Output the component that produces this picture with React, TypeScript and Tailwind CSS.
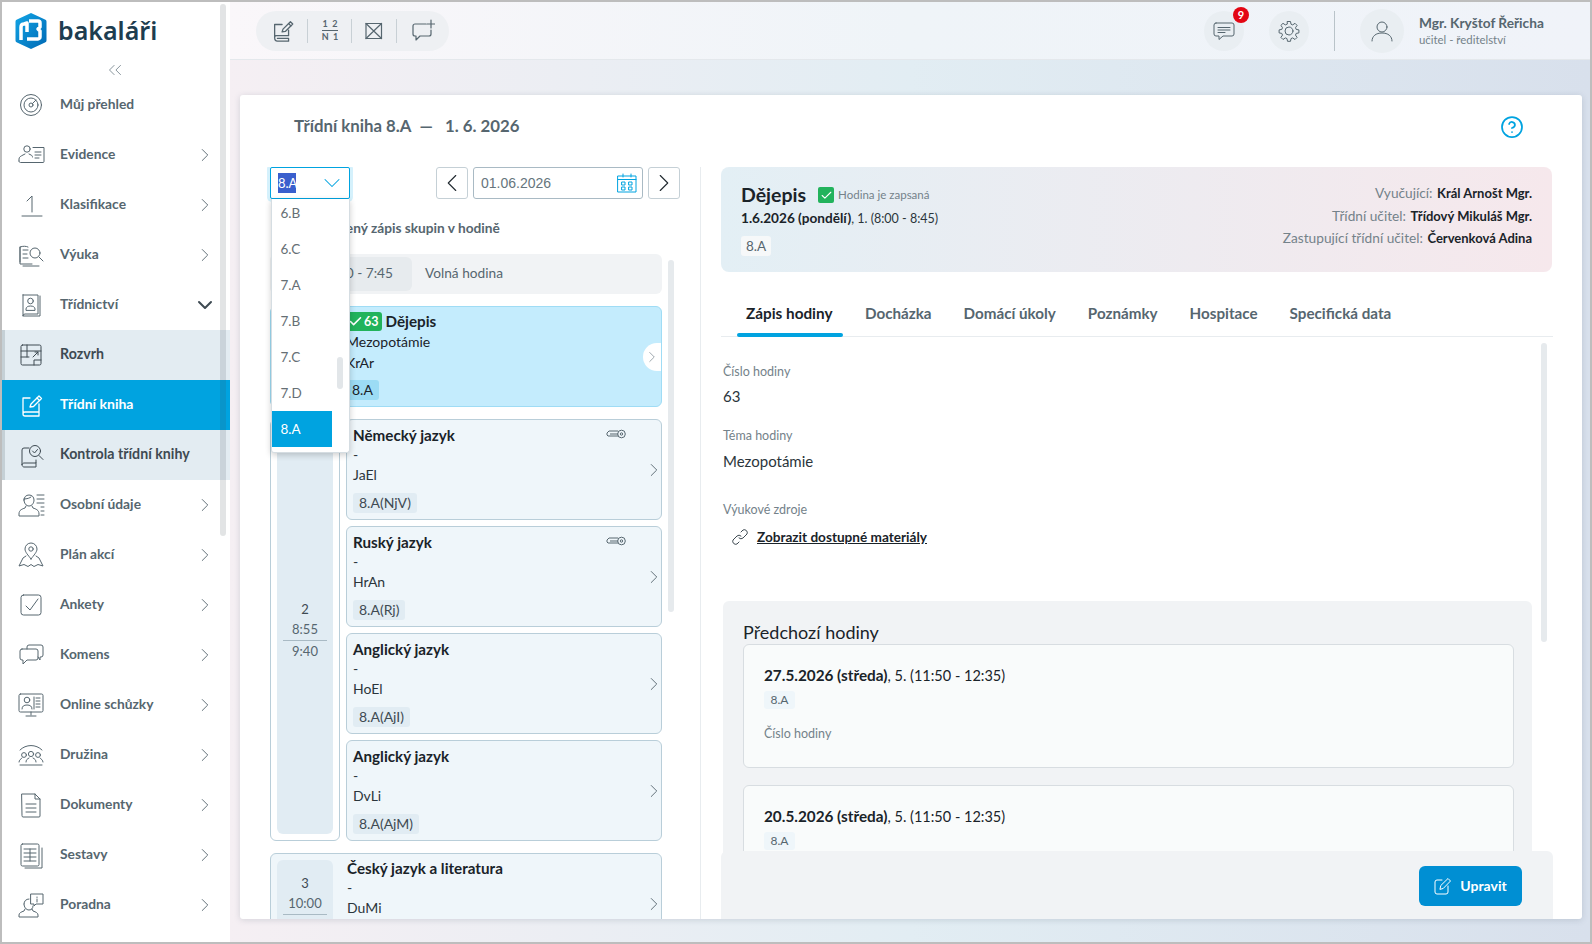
import React from 'react';
import { ChevronRight, ChevronDown, ChevronLeft, ChevronsLeft, Check, CircleHelp } from 'lucide-react';

type IconProps = { className?: string };

// shared frame for the thin line icons
function Line({ children, className = 'w-[28px] h-[28px] text-[#56666f]', box = 28 }: { children: React.ReactNode; className?: string; box?: number }) {
  return (
    <svg viewBox={`0 0 ${box} ${box}`} fill="none" stroke="currentColor" strokeWidth="1" strokeLinecap="round" strokeLinejoin="round" className={className}>
      {children}
    </svg>
  );
}

const IconDash = () => (
  <Line>
    <circle cx="14" cy="14" r="10.5" />
    <circle cx="14" cy="14" r="7" />
    <circle cx="14" cy="14" r="2" />
    <path d="M15.5 12.5l3.5-3.5" />
  </Line>
);
const IconEvidence = () => (
  <Line>
    <circle cx="10" cy="8" r="3.2" />
    <path d="M2 20v-2c0-2 2-3 4-4l2-1M12 13l2 1c1 .5 1.500 1 1.500 2M2 20c0 1 .5 1.500 1.500 1.500H26c.8 0 1-.5 1-1V6.500H16" />
    <path d="M18 11h6M18 14h6M18 17h4" />
  </Line>
);
const IconOne = () => (
  <Line>
    <path d="M15 21V5l-5 5M5 25h20" />
  </Line>
);
const IconTeach = () => (
  <Line>
    <path d="M3 21V6c3-1 6-1 8 0M3 6v17h12M6 25h16" />
    <path d="M6 9h5M6 13h4M6 17h5" />
    <circle cx="18" cy="12" r="5" />
    <path d="M22 16l4 4" />
  </Line>
);
const IconClassBook = () => (
  <Line>
    <path d="M6 4h15v19H8a2 2 0 0 0-2 2V4zM6 25h17V5" />
    <circle cx="13.500" cy="10" r="2.800" />
    <path d="M9 19v-1c0-2 2-3 4.500-3s4.500 1 4.500 3v1z" />
  </Line>
);
const IconSchedule = () => (
  <Line className="w-[28px] h-[28px] text-[#3e4a52]">
    <rect x="4" y="4" width="20" height="20" rx="1.500" />
    <path d="M4 10h20M10 4v12M4 16h8M17 24v-5h7" />
    <path d="M16 16l5-5M18 11h3v3" />
  </Line>
);
const IconClassEdit = () => (
  <Line className="w-[28px] h-[28px] text-white stroke-[1.300]">
    <path d="M6 7h7M6 7v16c0-1 1-2 2-2h14V13M6 23c0 1 1 2 2 2h14v-4" />
    <path d="M13 16l1-3 8-8 2.500 2.500-8 8z" />
    <path d="M20 7l2.500 2.500" />
  </Line>
);
const IconCheckBook = () => (
  <Line className="w-[28px] h-[28px] text-[#3e4a52]">
    <path d="M12 7H7a2 2 0 0 0-2 2v15c0-1 1-2 2-2h12v-3M5 24c0 1 1 2 2 2h12v-4" />
    <circle cx="18" cy="10" r="5.500" />
    <path d="M15.500 10l2 2 3-3.500M22 14.500l4 4" />
  </Line>
);
const IconPerson = () => (
  <Line>
    <path d="M7 9c0-3 2-5 5-5s5 2 5 5-2 6-5 6-5-3-5-6zM7 8c3 0 6-1 7-2M9 15l-1 2c-3 1-6 2-6 6v2h20v-2c0-4-3-5-6-6l-1-2" />
    <path d="M20 4h7M20 8h7M20 12h7M24 16h3M24 20h3M24 24h3" />
  </Line>
);
const IconPin = () => (
  <Line>
    <path d="M14 18c-3-4-6-7-6-10a6 6 0 0 1 12 0c0 3-3 6-6 10z" />
    <circle cx="14" cy="8" r="2.200" />
    <path d="M9 15l-3 2-4 8 5-1.500 4 2 3-2 3 2 4-2 5 1.500-4-8-3-2" />
  </Line>
);
const IconCheckBox = () => (
  <Line>
    <rect x="4" y="4" width="20" height="20" rx="2.500" />
    <path d="M9 15l4 4 8-11" />
  </Line>
);
const IconChat = () => (
  <Line>
    <path d="M5 8h14a2 2 0 0 1 2 2v7a2 2 0 0 1-2 2H10l-4 4v-4H5a2 2 0 0 1-2-2v-7a2 2 0 0 1 2-2z" />
    <path d="M10 8V6a2 2 0 0 1 2-2h12a2 2 0 0 1 2 2v8a2 2 0 0 1-2 2h-1v3l-2-3" />
  </Line>
);
const IconOnline = () => (
  <Line>
    <rect x="2" y="3" width="24" height="18" rx="1.500" />
    <circle cx="10" cy="9" r="2.800" />
    <path d="M5 18c0-3 2-4 5-4s5 1 5 4M17 6v12M19 7h4M19 10h4M19 13h4M19 16h4M14 21v3M9 25h10" />
  </Line>
);
const IconGroup = () => (
  <Line>
    <path d="M3 9c6-6 16-6 22 0" />
    <circle cx="7" cy="14" r="2.400" />
    <circle cx="14" cy="13" r="2.600" />
    <circle cx="21" cy="14" r="2.400" />
    <path d="M2 21c0-2 2-3 3-4M12 17c-2 1-3 2-3 4M16 17c2 1 3 2 3 4M26 21c0-2-2-3-3-4M3 24h22" />
  </Line>
);
const IconDoc = () => (
  <Line>
    <path d="M5 3h13l5 5v17a1 1 0 0 1-1 1H6a1 1 0 0 1-1-1z" />
    <path d="M18 3v5h5M9 13h10M9 17h10M9 21h10" />
  </Line>
);
const IconReport = () => (
  <Line>
    <rect x="4" y="3" width="18" height="22" rx="1.500" />
    <path d="M7 8h12M7 12h12M7 16h12M7 20h12M13 8v12M25 7v20H8" />
  </Line>
);
const IconAdvice = () => (
  <Line>
    <path d="M7 13c0-3 2-5 5-5M7 13c0 3 2 6 5 6s4-2 4-4M8 18l-1 2c-3 1-5 2-5 4v2h19v-2c0-2-2-3-5-4l-1-2" />
    <path d="M14 3h12v10h-7l-2 2v-2h-3z" />
    <path d="M20 6v.5M20 8v3" />
  </Line>
);

const BookEdit = ({ className }: IconProps) => (
  <Line className={className}>
    <path d="M5 7h8M5 7v14M5 21c0-1 1-2 2-2h13v-6M5 21c0 2 1 4 3 4h12v-3H8M8 22h12" />
    <path d="M13 15l1-3 8-8 2.500 2.500-8 8z" />
    <path d="M20 6l2.500 2.500" />
  </Line>
);

function KeyIcon() {
  return (
    <svg viewBox="0 0 20 10" fill="none" stroke="#56666f" strokeWidth="1" className="w-[20px] h-[10px]">
      <path d="M12 2H3L1 4v2l1 1h10M4 5h8" />
      <circle cx="15.500" cy="5" r="3.800" />
      <circle cx="15.500" cy="5" r="1.200" />
    </svg>
  );
}

function Logo() {
  return (
    <svg viewBox="0 0 32 36" className="w-[32px] h-[36px]">
      <defs>
        <linearGradient id="lg" x1="0" y1="0" x2="1" y2="1">
          <stop offset="0" stopColor="#12a5e6" />
          <stop offset="1" stopColor="#0069b4" />
        </linearGradient>
      </defs>
      <path d="M16 0l14 6.500a2 2 0 0 1 1.500 2v19a2 2 0 0 1-1.500 2L16 36 2 29.500a2 2 0 0 1-1.500-2v-19a2 2 0 0 1 1.500-2z" fill="url(#lg)" />
      <path d="M6 27V14c0-2 1-3 3-3l3-1v9M14 8h9c1.500 0 2 1 2 2v4l-2 2 2 2v6c0 1-1 2-2 2H12" fill="none" stroke="#fff" strokeWidth="3.500" strokeLinejoin="round" />
    </svg>
  );
}

type NavEntry = { label: string; icon: React.ReactNode; sub?: boolean; active?: boolean; open?: boolean; plain?: boolean };

const nav: NavEntry[] = [
  { label: 'Můj přehled', icon: <IconDash />, plain: true },
  { label: 'Evidence', icon: <IconEvidence /> },
  { label: 'Klasifikace', icon: <IconOne /> },
  { label: 'Výuka', icon: <IconTeach /> },
  { label: 'Třídnictví', icon: <IconClassBook />, open: true },
  { label: 'Rozvrh', icon: <IconSchedule />, sub: true },
  { label: 'Třídní kniha', icon: <IconClassEdit />, sub: true, active: true },
  { label: 'Kontrola třídní knihy', icon: <IconCheckBook />, sub: true },
  { label: 'Osobní údaje', icon: <IconPerson /> },
  { label: 'Plán akcí', icon: <IconPin /> },
  { label: 'Ankety', icon: <IconCheckBox /> },
  { label: 'Komens', icon: <IconChat /> },
  { label: 'Online schůzky', icon: <IconOnline /> },
  { label: 'Družina', icon: <IconGroup /> },
  { label: 'Dokumenty', icon: <IconDoc /> },
  { label: 'Sestavy', icon: <IconReport /> },
  { label: 'Poradna', icon: <IconAdvice /> },
];

function NavRow({ item }: { item: NavEntry }) {
  const bg = item.active ? 'bg-[#00a3e0] text-white text-[14px]' : item.sub ? 'bg-[#e3ecf2] text-[#3e4a52] text-[14.2px]' : 'text-[#56666f] text-[13.8px]';
  return (
    <div className={`relative flex items-center h-[50px] shrink-0 leading-[20px] font-bold ${bg}`}>
      {item.sub && !item.active && <div className="absolute left-0 top-0 bottom-0 w-[3px] bg-[#c5d0d6]" />}
      <div className="w-[58px] pl-[15px] shrink-0 flex items-center">{item.icon}</div>
      <span className="flex-1 whitespace-nowrap -mt-[2px]">{item.label}</span>
      {!item.sub && !item.plain && !item.open && <ChevronRight className="w-[22px] h-[22px] mr-[14px] text-[#56666f]" strokeWidth={1} />}
      {item.open && <ChevronDown className="w-[24px] h-[24px] mr-[13px] text-[#3e4a52]" strokeWidth={2} />}
    </div>
  );
}

function Sidebar() {
  return (
    <aside className="relative w-[228px] shrink-0 bg-white overflow-hidden flex flex-col">
      <div className="h-[58px] shrink-0 flex items-center pl-[13px] gap-[11px]">
        <Logo />
        <span className="font-['Noto_Sans',sans-serif] text-[25px] leading-[30px] font-semibold text-[#1d3d50] -mt-[3px]">bakaláři</span>
      </div>
      <div className="h-[20px] shrink-0 flex justify-center pr-[2px]">
        <ChevronsLeft className="w-[22px] h-[22px] text-[#7d8b93] -mt-[1px]" strokeWidth={1} />
      </div>
      {nav.map((item) => (
        <NavRow key={item.label} item={item} />
      ))}
      <div className="absolute left-[218px] top-[2px] w-[6px] h-[532px] rounded-full bg-[#3e4a52]/15" />
    </aside>
  );
}

function TopBar() {
  return (
    <header className="h-[58px] shrink-0 flex items-center justify-between pl-[26px] pr-[47px] bg-gradient-to-r from-[#faf7fa] via-[#eff4f8] to-[#f0f3f9] border-b border-[#e4e8ec]">
      <div className="flex items-center h-[40px] px-[14px] rounded-full bg-[#eef0f3]">
        <BookEdit className="w-[26px] h-[26px] text-[#56666f] stroke-[1.400]" />
        <div className="w-px h-[24px] bg-[#c8d0d5] ml-[11px] mr-[12px]" />
        <div className="flex flex-col items-center w-[20px] text-[9px] leading-[10px] font-bold text-[#56666f] whitespace-nowrap">
          <span>1&nbsp;&nbsp;2</span>
          <div className="w-[16px] h-px bg-[#56666f] my-[1px]" />
          <span>N&nbsp;&nbsp;1</span>
        </div>
        <div className="w-px h-[24px] bg-[#c8d0d5] ml-[11px] mr-[13px]" />
        <Line className="w-[18px] h-[18px] text-[#56666f] stroke-[1.200]" box={18}>
          <rect x="1" y="1.500" width="15.500" height="15" />
          <path d="M1 1.500l15.500 15M16.500 1.500L1 16.500" />
        </Line>
        <div className="w-px h-[24px] bg-[#c8d0d5] ml-[13px] mr-[14px]" />
        <Line className="w-[24px] h-[24px] text-[#56666f] stroke-[1.200]" box={24}>
          <path d="M15 5H4a2 2 0 0 0-2 2v8a2 2 0 0 0 2 2h1v4l4-4h9a2 2 0 0 0 2-2v-4" />
          <path d="M20 1v8M16 5h8" />
        </Line>
      </div>
      <div className="flex items-center">
        <div className="relative w-[40px] h-[40px] rounded-full bg-[#e9eef2] flex items-center justify-center">
          <Line className="w-[24px] h-[24px] text-[#56666f]" box={24}>
            <path d="M4 4h16a2 2 0 0 1 2 2v9a2 2 0 0 1-2 2h-9l-4 3.500V17H4a2 2 0 0 1-2-2V6a2 2 0 0 1 2-2z" />
            <path d="M6 8.500h12M6 11h12M6 13.500h7" />
          </Line>
          <span className="absolute -top-[4px] right-[-5px] w-[16px] h-[16px] rounded-full bg-[#e30613] text-white text-[11px] leading-[16px] text-center font-bold">9</span>
        </div>
        <div className="w-[40px] h-[40px] rounded-full bg-[#e9eef2] flex items-center justify-center ml-[25px]">
          <Line className="w-[22px] h-[22px] text-[#56666f]" box={22}>
            <path d="M9.500 1.500h3l.5 2.700 1.700.7 2.300-1.600 2.100 2.100-1.600 2.300.7 1.700 2.700.5v3l-2.700.5-.7 1.700 1.600 2.300-2.100 2.100-2.300-1.600-1.700.7-.5 2.700h-3l-.5-2.700-1.700-.7-2.300 1.600-2.100-2.100 1.600-2.300-.7-1.700-2.700-.5v-3l2.700-.5.7-1.700-1.600-2.300 2.100-2.100 2.300 1.600 1.700-.7z" />
            <circle cx="11" cy="11" r="4" />
          </Line>
        </div>
        <div className="w-px h-[40px] bg-[#b9c3c9] ml-[25px] mr-[25px]" />
        <div className="w-[44px] h-[44px] rounded-full bg-[#e9eef2] flex items-center justify-center">
          <Line className="w-[24px] h-[24px] text-[#56666f]" box={24}>
            <circle cx="12" cy="8" r="5" />
            <path d="M2 22c0-5 4-8 10-8s10 3 10 8" />
          </Line>
        </div>
        <div className="ml-[15px] flex flex-col w-[124px] whitespace-nowrap">
          <span className="text-[13.700px] leading-[18px] font-bold text-[#56666f]">Mgr. Kryštof Řeřicha</span>
          <span className="text-[11.400px] leading-[15px] text-[#74828a]">učitel - ředitelství</span>
        </div>
      </div>
    </header>
  );
}

function ClassSelect() {
  const options = ['6.B', '6.C', '7.A', '7.B', '7.C', '7.D', '8.A'];
  return (
    <div className="relative w-[80px] h-[32px]">
      <div className="h-full flex items-center justify-between pl-[7px] pr-[3px] bg-white border border-[#00a3e0] rounded-[2px] shadow-[0_0_0_3px_#d5f1fc]">
        <span className="bg-[#3a5fcd] text-white text-[13px] leading-[20px] w-[18px] whitespace-nowrap">8.A</span>
        <ChevronDown className="w-[28px] h-[28px] text-[#00a3e0]" strokeWidth={0.9} />
      </div>
      <div className="absolute z-20 left-[0.5px] top-[32px] w-[79px] h-[254px] bg-white overflow-hidden rounded-b-[3px] border-x border-b border-[#d5dde2] shadow-[0_2px_6px_rgba(0,0,0,0.2)]">
        <div className="-mt-[4px] w-[60px]">
          {options.map((o) => (
            <div key={o} className={`h-[36px] pl-[9px] flex items-center text-[13.500px] leading-[20px] ${o === '8.A' ? 'bg-[#00a3e0] text-white' : 'text-[#666f75]'}`}>
              {o}
            </div>
          ))}
        </div>
        <div className="absolute left-[65px] top-[158px] w-[6px] h-[32px] rounded-full bg-[#e2e6e9]" />
      </div>
    </div>
  );
}

function DateNav() {
  return (
    <div className="flex items-center gap-[5px]">
      <button className="w-[32px] h-[32px] border border-[#c5d0d6] rounded-[3px] flex items-center justify-center bg-white">
        <ChevronLeft className="w-[30px] h-[30px] text-[#222b31]" strokeWidth={0.9} />
      </button>
      <div className="w-[170px] h-[32px] border border-[#a9bac4] rounded-[3px] flex items-center justify-between pl-[7px] pr-[5px] bg-white">
        <span className="font-['Liberation_Sans',sans-serif] text-[14px] text-[#66757d]">01.06.2026</span>
        <Line className="w-[20px] h-[20px] text-[#00a3e0]" box={20}>
          <rect x="1" y="3" width="18" height="16" />
          <path d="M1 6.500h18M6 1v3M14 1v3" />
          <rect x="5" y="9" width="3" height="3" />
          <rect x="12" y="9" width="3" height="3" />
          <rect x="5" y="14" width="3" height="3" />
          <rect x="12" y="14" width="3" height="3" />
        </Line>
      </div>
      <button className="w-[32px] h-[32px] border border-[#c5d0d6] rounded-[3px] flex items-center justify-center bg-white">
        <ChevronRight className="w-[30px] h-[30px] text-[#222b31]" strokeWidth={0.9} />
      </button>
    </div>
  );
}

function TimeColumn({ n, from, to }: { n: string; from: string; to: string }) {
  return (
    <div className="w-[56px] shrink-0 bg-[#e1ecf3] rounded-md flex flex-col items-center justify-center text-[13px] leading-[20px] text-[#56666f]">
      <span className="text-[#3e4a52]">{n}</span>
      <span className="h-[21px]">{from}</span>
      <div className="w-[44px] h-px bg-[#a9bac4] shrink-0" />
      <span>{to}</span>
    </div>
  );
}

function LessonBody({ title, teacher, group, keyed }: { title: string; teacher: string; group?: string; keyed?: boolean }) {
  return (
    <div className="relative flex-1 text-[14px] leading-[20px] text-[#2b353b]">
      <div className="flex items-center justify-between">
        <span className="text-[15.200px] font-bold text-[#1a2329]">{title}</span>
        {keyed && <div className="mr-[27px] -mt-[2px]"><KeyIcon /></div>}
      </div>
      <div>-</div>
      <div>{teacher}</div>
      {group && <div className="mt-[8px] inline-block h-[20px] px-[6px] rounded-[3px] bg-[#e1ecf3] text-[#3e4a52]">{group}</div>}
    </div>
  );
}

function GroupCard({ title, teacher, group, keyed }: { title: string; teacher: string; group: string; keyed?: boolean }) {
  return (
    <div className="relative flex-1 border border-[#b9ced9] rounded-md bg-[#eff6fa] pl-[6px] pt-[5px] pr-[8px]">
      <LessonBody title={title} teacher={teacher} group={group} keyed={keyed} />
      <ChevronRight className="absolute -right-[4px] top-[39px] w-[22px] h-[22px] text-[#56666f]" strokeWidth={1} />
    </div>
  );
}

function Timetable() {
  return (
    <div className="flex items-start">
      <div className="w-[392px] flex flex-col gap-[12px]">
        <div className="h-[40px] rounded-md bg-[#f1f3f5] flex items-center pl-[7px] pr-[7px] py-[3px] text-[13.700px] leading-[18px] text-[#56666f]">
          <div className="w-[135px] h-[34px] flex items-center justify-end rounded-md bg-[#e7ebee] pr-[19px] pb-[2px]">7:00 - 7:45</div>
          <span className="ml-[13px] -mt-[2px]">Volná hodina</span>
        </div>

        <div className="relative h-[101px] flex border border-[#9fdcf5] rounded-md bg-[#c4ecfd]">
          <div className="w-[75px] shrink-0" />
          <div className="pt-[4px] text-[14px] leading-[21px] text-[#1a2329]">
            <div className="flex items-center h-[20px]">
              <span className="flex items-center h-[19px] px-[2px] rounded-[3px] bg-[#22b35c] text-white text-[12.500px] font-bold">
                <Check className="w-[15px] h-[15px]" strokeWidth={2.500} />
                <span className="ml-[1px] mr-[1px]">63</span>
              </span>
              <span className="ml-[4px] text-[15.200px] font-bold">Dějepis</span>
            </div>
            <div>Mezopotámie</div>
            <div>KrAr</div>
            <div className="mt-[7px] h-[20px] inline-block px-[6px] leading-[20px] rounded-[3px] bg-[#9cdcf5]">8.A</div>
          </div>
          <div className="absolute right-0 top-[36px] w-[18px] h-[28px] rounded-l-full bg-white flex items-center justify-center">
            <ChevronRight className="w-[20px] h-[20px] text-[#7d8b93]" strokeWidth={1} />
          </div>
        </div>

        <div className="flex h-[422px] gap-[6px]">
          <div className="w-[70px] shrink-0 border border-[#b9ced9] rounded-md p-[6px] flex">
            <TimeColumn n="2" from="8:55" to="9:40" />
          </div>
          <div className="flex-1 flex flex-col gap-[6px]">
            <GroupCard title="Německý jazyk" teacher="JaEl" group="8.A(NjV)" keyed />
            <GroupCard title="Ruský jazyk" teacher="HrAn" group="8.A(Rj)" keyed />
            <GroupCard title="Anglický jazyk" teacher="HoEl" group="8.A(AjI)" />
            <GroupCard title="Anglický jazyk" teacher="DvLi" group="8.A(AjM)" />
          </div>
        </div>

        <div className="relative h-[101px] flex border border-[#b9ced9] rounded-md bg-[#eff6fa] pl-[6px] py-[6px]">
          <TimeColumn n="3" from="10:00" to="10:45" />
          <div className="ml-[14px] -mt-[2px]">
            <LessonBody title="Český jazyk a literatura" teacher="DuMi" />
          </div>
          <ChevronRight className="absolute -right-[4px] top-[39px] w-[22px] h-[22px] text-[#56666f]" strokeWidth={1} />
        </div>
      </div>
      <div className="ml-[6px] mt-[6px] w-[6px] h-[352px] rounded-full bg-[#e6eaed] shrink-0" />
    </div>
  );
}

function PrevLesson({ date, time }: { date: string; time: string }) {
  return (
    <div className="shrink-0 h-[124px] border border-[#d8dde1] rounded-md bg-[#f9fbfb] pl-[20px] pt-[20px] text-[#1a2329]">
      <div className="text-[14.500px] leading-[20px]">
        <span className="font-bold text-[15.300px]">{date}</span>, {time}
      </div>
      <div className="mt-[5px] w-[31px] h-[18px] rounded-[3px] bg-[#eff6fa] text-[12px] leading-[18px] text-center text-[#56666f]">8.A</div>
      <div className="mt-[15px] text-[12.500px] leading-[20px] text-[#74828a]">Číslo hodiny</div>
    </div>
  );
}

function Detail() {
  const tabs = ['Docházka', 'Domácí úkoly', 'Poznámky', 'Hospitace', 'Specifická data'];
  return (
    <div className="relative w-[832px] shrink-0 h-full overflow-hidden">
      <div className="h-[105px] rounded-lg bg-gradient-to-r from-[#e3eff5] to-[#f6e8ec] flex justify-between px-[20px] pt-[14px] mr-[1px]">
        <div>
          <div className="flex items-center h-[28px]">
            <span className="text-[19.500px] leading-[28px] font-bold text-[#1a2329]">Dějepis</span>
            <span className="ml-[12px] w-[16px] h-[16px] rounded-[2px] bg-[#22b35c] flex items-center justify-center">
              <Check className="w-[13px] h-[13px] text-white" strokeWidth={2} />
            </span>
            <span className="ml-[4px] text-[11.500px] text-[#74828a]">Hodina je zapsaná</span>
          </div>
          <div className="text-[12.500px] leading-[18px] text-[#2b353b]">
            <span className="font-bold text-[13.600px] text-[#1a2329]">1.6.2026 (pondělí)</span>, 1. (8:00 - 8:45)
          </div>
          <div className="mt-[8px] w-[30px] h-[20px] rounded-[3px] bg-[#f6f8f9] text-[13.500px] leading-[20px] text-center text-[#56666f]">8.A</div>
        </div>
        <div className="text-right text-[13.700px] leading-[21.5px] text-[#74828a] pt-[1px]">
          <div>Vyučující: <span className="ml-[1px] font-bold text-[13px] text-[#1a2329]">Král Arnošt Mgr.</span></div>
          <div>Třídní učitel: <span className="ml-[1px] font-bold text-[13px] text-[#1a2329]">Třídový Mikuláš Mgr.</span></div>
          <div>Zastupující třídní učitel: <span className="ml-[1px] font-bold text-[13px] text-[#1a2329]">Červenková Adina</span></div>
        </div>
      </div>

      <div className="mt-[18px] h-[47px] flex items-stretch border-b border-[#e8ecef] pl-[16px]">
        <div className="relative w-[106px] pl-[9px] pt-[12px] text-[15.300px] leading-[22px] font-bold text-[#1a2329] whitespace-nowrap">
          Zápis hodiny
          <div className="absolute left-0 right-0 -bottom-[1px] h-[4px] rounded-sm bg-[#00a3e0]" />
        </div>
        <div className="flex pt-[12px] pl-[22px] gap-[32px] text-[15.200px] leading-[22px] font-bold text-[#56666f] whitespace-nowrap">
          {tabs.map((t) => (
            <span key={t}>{t}</span>
          ))}
        </div>
      </div>

      <div className="pl-[2px] pr-[21px] pt-[25px]">
        <div className="text-[12.500px] leading-[20px] text-[#74828a]">Číslo hodiny</div>
        <div className="mt-[4px] text-[15px] leading-[20px] text-[#2b353b]">63</div>
        <div className="mt-[20px] text-[12.500px] leading-[20px] text-[#74828a]">Téma hodiny</div>
        <div className="mt-[4px] text-[15px] leading-[22px] text-[#2b353b]">Mezopotámie</div>
        <div className="mt-[28px] text-[12.500px] leading-[20px] text-[#74828a]">Výukové zdroje</div>
        <div className="mt-[7px] flex items-center pl-[8px] gap-[8px]">
          <Line className="w-[18px] h-[18px] text-[#3e4a52]" box={18}>
            <path d="M8 10a3 3 0 0 0 4 0l4-4a3 3 0 0 0-4-4l-2 2M10 8a3 3 0 0 0-4 0l-4 4a3 3 0 0 0 4 4l2-2" />
          </Line>
          <span className="text-[13.600px] leading-[20px] font-bold underline text-[#1a2329]">Zobrazit dostupné materiály</span>
        </div>

        <div className="mt-[54px] bg-[#f1f3f5] rounded-md pl-[20px] pr-[18px] pt-[20px] pb-[20px] flex flex-col mr-0">
          <h3 className="text-[18px] leading-[23px] font-normal text-[#1a2329]">Předchozí hodiny</h3>
          <div className="flex flex-col gap-[17px]">
            <PrevLesson date="27.5.2026 (středa)" time="5. (11:50 - 12:35)" />
            <PrevLesson date="20.5.2026 (středa)" time="5. (11:50 - 12:35)" />
          </div>
        </div>
      </div>

      <div className="absolute right-[6px] top-[176px] w-[6px] h-[299px] rounded-full bg-[#e6eaed]" />

      <div className="absolute left-0 right-0 bottom-0 h-[68px] bg-[#f1f3f5] rounded-t-md flex items-start justify-end pt-[15px] pr-[31px]">
        <button className="w-[103px] h-[40px] rounded-md bg-[#008fd3] text-white text-[14px] font-bold flex items-center justify-center gap-[8px]">
          <Line className="w-[18px] h-[18px] text-white" box={18}>
            <path d="M8 3H3a2 2 0 0 0-2 2v10a2 2 0 0 0 2 2h9a2 2 0 0 0 2-2V9" />
            <path d="M6 12l.8-3.500L14 1.500l2.500 2.500-7 7.200z" />
          </Line>
          <span className="-mt-[2px]">Upravit</span>
        </button>
      </div>
    </div>
  );
}

export default function App() {
  return (
    <div className="w-screen h-screen overflow-hidden flex border-2 border-[#bdbdbd] font-['Lato','Noto_Sans',sans-serif] bg-white">
      <Sidebar />
      <div className="flex-1 min-w-0 flex flex-col bg-gradient-to-r from-[#f5eff3] via-[#e2edf3] to-[#d8e0ec]">
        <TopBar />
        <div className="flex-1 min-h-0 pt-[35px] pl-[10px] pr-[8px] pb-[23px]">
          <main className="relative h-full bg-white rounded-[3px] overflow-hidden shadow-[0_1px_6px_rgba(60,80,100,0.18)] flex flex-col">
            <div className="h-[72px] shrink-0 flex items-start justify-between pl-[54px] pr-[58px] pt-[20px]">
              <h1 className="text-[16.800px] leading-[22px] font-bold text-[#56666f]">
                Třídní kniha 8.A<span className="mx-[8px]">—</span> 1. 6. 2026
              </h1>
              <CircleHelp className="w-[24px] h-[24px] text-[#00a3e0]" strokeWidth={1.750} />
            </div>
            <div className="flex-1 min-h-0 flex">
              <div className="w-[460px] shrink-0 pl-[30px] pr-[20px] overflow-hidden">
                <div className="flex justify-between">
                  <ClassSelect />
                  <DateNav />
                </div>
                <div className="h-[55px] pt-[19px] pl-[43px] text-[13.700px] leading-[20px] font-bold text-[#56666f] whitespace-nowrap">Sloučený zápis skupin v hodině</div>
                <Timetable />
              </div>
              <div className="w-px bg-[#e8ecef] shrink-0" />
              <div className="w-[20px] shrink-0" />
              <Detail />
            </div>
          </main>
        </div>
      </div>
    </div>
  );
}
